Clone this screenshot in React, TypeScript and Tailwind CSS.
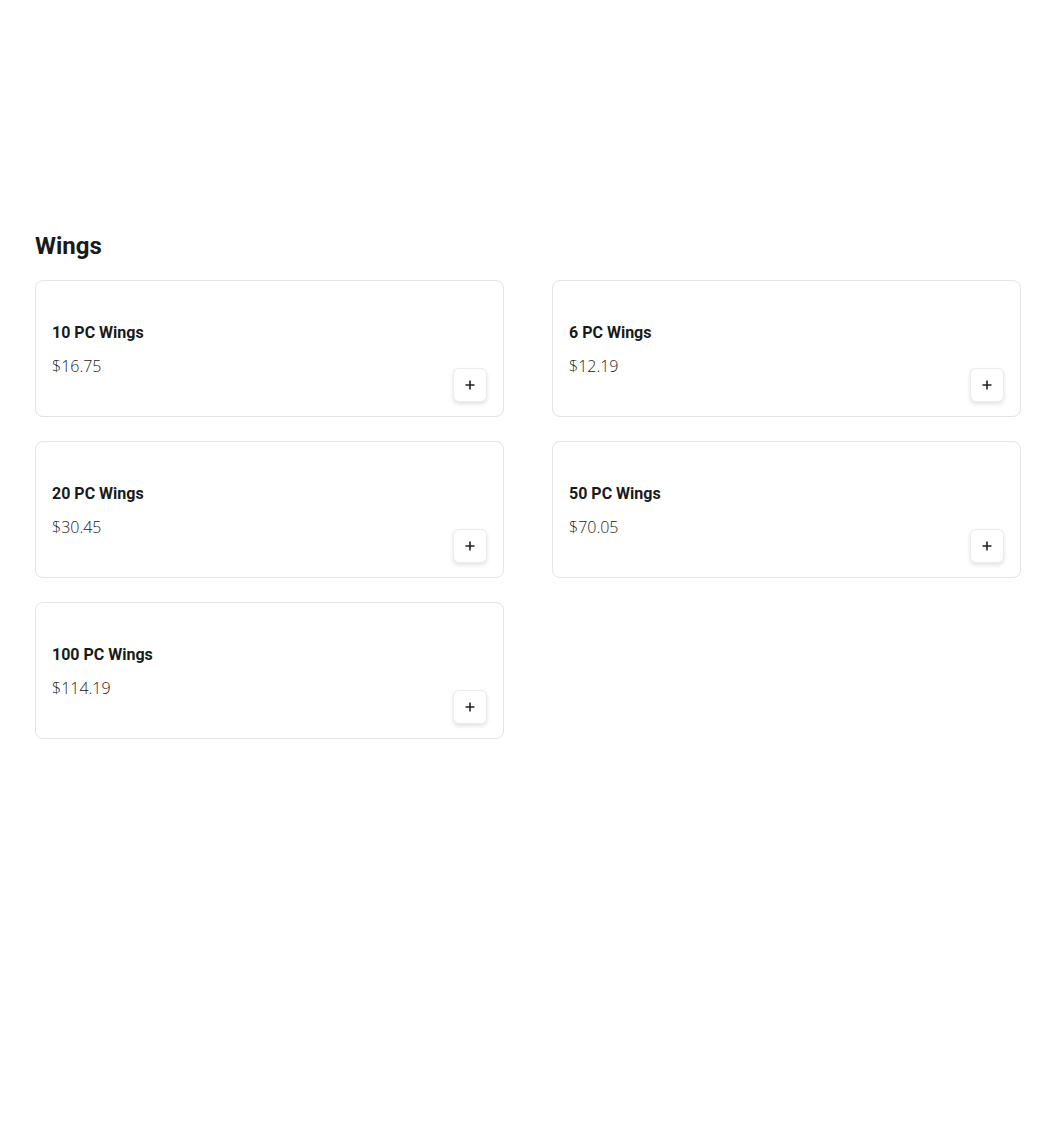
const items = [
  { id: 'w10', name: '10 PC Wings', price: 16.75 },
  { id: 'w6', name: '6 PC Wings', price: 12.19 },
  { id: 'w20', name: '20 PC Wings', price: 30.45 },
  { id: 'w50', name: '50 PC Wings', price: 70.05 },
  { id: 'w100', name: '100 PC Wings', price: 114.19 },
]

export default function App() {
  return (
    <div className="min-h-screen bg-white pl-[35px] pt-[230px]" style={{ fontFamily: 'Roboto, "Liberation Sans", sans-serif' }}>
      <h2 className="text-[24px] leading-[32px] font-bold text-[#1a1a1a] mb-[18px]">Wings</h2>

      <div className="grid grid-cols-[469px_469px] gap-x-[48px] gap-y-[24px]">
        {items.map((item) => (
          <div key={item.id} className="h-[137px] rounded-lg border border-[#e4e4e4] bg-white px-4 pb-[14px] flex items-end justify-between">
            <div className="pb-[26px]">
              <h3 className="text-[16px] leading-[20px] font-bold text-[#1a1a1a]">{item.name}</h3>
              <p className="mt-[13px] text-[16px] leading-[20px] font-light text-[#222]" style={{ fontFamily: '"Open Sans", Lato, sans-serif' }}>${item.price.toFixed(2)}</p>
            </div>
            <button className="w-[34px] h-[34px] rounded-md bg-white border border-[#ececec] shadow-[0_2px_4px_rgba(0,0,0,0.12)] flex items-center justify-center text-[#222]">
              <svg width="12" height="12" viewBox="0 0 12 12" fill="none" stroke="currentColor" strokeWidth="1.6">
                <path d="M6 1.5v9M1.5 6h9" />
              </svg>
            </button>
          </div>
        ))}
      </div>
    </div>
  )
}
